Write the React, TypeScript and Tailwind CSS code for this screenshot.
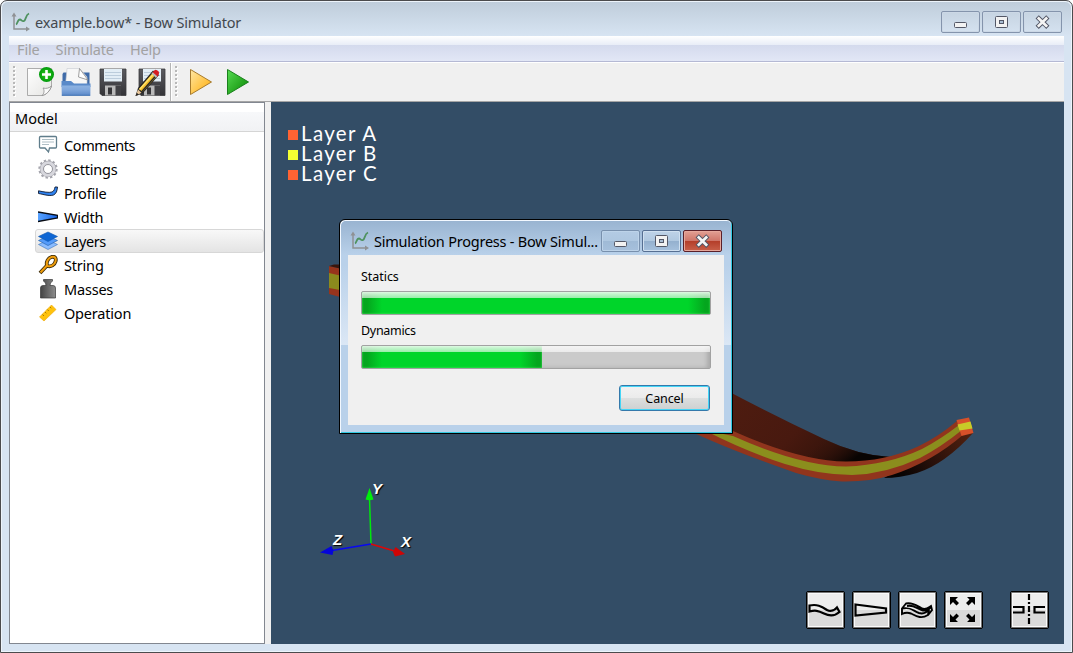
import React from "react";

const UI = "[font-family:'Noto_Sans','Open_Sans',sans-serif]";

function ChartIcon() {
  return (
    <svg width="20" height="20" viewBox="0 0 20 20" fill="none">
      <path d="M3 3V17H16" stroke="#8f9194" strokeWidth="1.500" />
      <path d="M3 0.500L0.500 4.500H5.500ZM19 17L15 14.500V19.500Z" fill="#8f9194" />
      <path d="M5 12.500C6.500 12 6.500 7.500 9 7.500C10.500 7.500 11 10 13 9C15 8 14.500 3 18 1.500" stroke="#4f9260" strokeWidth="1.800" />
    </svg>
  );
}

function MinGlyph() {
  return (
    <svg width="15" height="15" viewBox="0 0 15 15">
      <rect x="1.500" y="7.500" width="12" height="5" rx="1" fill="#f2f2f2" stroke="#535766" />
    </svg>
  );
}

function MaxGlyph() {
  return (
    <svg width="15" height="15" viewBox="0 0 15 15">
      <rect x="1.500" y="1.500" width="12" height="11" rx="1" fill="#f2f2f2" stroke="#535766" />
      <rect x="5.500" y="5.500" width="4" height="3" fill="#a9bdd3" stroke="#535766" />
    </svg>
  );
}

function CloseGlyph() {
  return (
    <svg width="15" height="15" viewBox="0 0 15 15">
      <path d="M3.800 3.500L11.200 10.700M11.200 3.500L3.800 10.700" stroke="#535766" strokeWidth="4.600" strokeLinecap="square" />
      <path d="M3.800 3.500L11.200 10.700M11.200 3.500L3.800 10.700" stroke="#f5f5f5" strokeWidth="2.700" strokeLinecap="square" />
    </svg>
  );
}

function Handle() {
  return (
    <svg width="4" height="32" viewBox="0 0 4 32">
      {[0, 4, 8, 12, 16, 20, 24, 28].map((y) => (
        <g key={y}>
          <rect x="1" y={y + 1} width="2" height="2" fill="#fff" />
          <rect x="0" y={y} width="2" height="2" fill="#b8b8b8" />
        </g>
      ))}
    </svg>
  );
}

function NewIcon() {
  return (
    <svg width="30" height="32" viewBox="0 0 30 32">
      <defs>
        <linearGradient id="paper" x1="0" y1="0" x2="1" y2="1">
          <stop offset="0" stopColor="#fff" />
          <stop offset="1" stopColor="#e4e4e2" />
        </linearGradient>
        <radialGradient id="plus" cx="0.5" cy="0.5" r="0.5">
          <stop offset="0" stopColor="#32cc20" />
          <stop offset="1" stopColor="#009a0b" />
        </radialGradient>
      </defs>
      <path d="M1.500 2.500H25.500V20C24 25 20 29 16 29.500H1.500Z" fill="url(#paper)" stroke="#999" strokeWidth="0.800" />
      <path d="M16 29.500C18.500 27.500 18.500 24 17 22C20 23 23.500 22 25.500 20C24 25 20 29 16 29.500Z" fill="#fafafa" stroke="#8b8b8b" strokeWidth="0.800" />
      <circle cx="20.500" cy="8.500" r="7.500" fill="url(#plus)" />
      <path d="M20.500 4V13M16 8.500H25" stroke="#fff" strokeWidth="2.600" />
    </svg>
  );
}

function OpenIcon() {
  return (
    <svg width="30" height="32" viewBox="0 0 30 32">
      <defs>
        <linearGradient id="folder" x1="0" y1="0" x2="0" y2="1">
          <stop offset="0" stopColor="#8eb3e2" />
          <stop offset="0.400" stopColor="#82a9dd" />
          <stop offset="1" stopColor="#5a88c8" />
        </linearGradient>
      </defs>
      <path d="M1.500 20V8L2.500 6.500H28.500V20Z" fill="#3f6ba8" />
      <path d="M4.500 19L6 2.500H18.500L26 11V19Z" fill="#f7f7f7" stroke="#c6cad0" strokeWidth="0.600" />
      <path d="M18.500 2.500L17.500 11L27 14Z" fill="#fff" stroke="#888" strokeWidth="0.800" />
      <path d="M0.500 15H10L13 17.500H29.500V21H0.500Z" fill="#5a8ac9" />
      <path d="M0.500 19.500H29.500L29.300 29.500H0.800Z" fill="url(#folder)" />
      <path d="M0.800 29.300H29.200" stroke="#4475b5" />
    </svg>
  );
}

function SaveIcon({ pencil = false }: { pencil?: boolean }) {
  return (
    <svg width="32" height="32" viewBox="0 0 32 32">
      <defs>
        <linearGradient id="disk" x1="0" y1="0" x2="0" y2="1">
          <stop offset="0" stopColor="#5b5b60" />
          <stop offset="1" stopColor="#333337" />
        </linearGradient>
      </defs>
      <path d="M4 3H30V29.500H6L4 27.500Z" fill="url(#disk)" stroke="#3b3b3e" strokeWidth="0.800" />
      <rect x="8" y="3" width="18" height="12.500" fill="#e3eef6" />
      <path d="M9 6.500H25M9 9.500H25M9 12.500H25" stroke="#bccddc" />
      <path d="M9 19.500H25V29.500H9Z" fill="#b9b9b9" />
      <rect x="19.500" y="19.500" width="5.500" height="10" fill="#414145" />
      <rect x="12" y="21.500" width="4" height="7" fill="#353538" />
      {pencil && (
        <g>
          <path d="M0.500 30L3 22L18 4.500L24 9L8 27Z" fill="#252525" />
          <path d="M4 23L18 6.500L22.200 9.800L7.500 26Z" fill="#f5bd27" />
          <path d="M4.500 23.500L19 7.500" stroke="#ffe36c" strokeWidth="1.500" />
          <path d="M6.500 26L21.500 9" stroke="#282828" strokeWidth="1.500" />
          <path d="M17.500 6.500L19.500 4.200Q21 3 23.500 5.300Q25 7.500 23.300 9.300L22 11Z" fill="#d61b22" />
          <path d="M16.500 7.800L17.700 6.300L22.300 10.300L21 11.800Z" fill="#bbb" />
          <path d="M0.500 30L3 23.500L6.500 26.800Z" fill="#e8c69a" />
          <path d="M0.500 30L1.700 26.700L4 28.800Z" fill="#222" />
        </g>
      )}
    </svg>
  );
}

function PlayIcon({ green = false }: { green?: boolean }) {
  return (
    <svg width="24" height="28" viewBox="0 0 24 28">
      <defs>
        <linearGradient id="gold" x1="0" y1="0" x2="1" y2="1">
          <stop offset="0" stopColor="#ffe7a4" />
          <stop offset="1" stopColor="#ffac05" />
        </linearGradient>
        <linearGradient id="green" x1="0" y1="0" x2="1" y2="1">
          <stop offset="0" stopColor="#56dc52" />
          <stop offset="1" stopColor="#078500" />
        </linearGradient>
      </defs>
      {green ? (
        <path d="M1.500 1.500L22.500 14L1.500 26.500Z" fill="url(#green)" stroke="#1a801c" />
      ) : (
        <path d="M1.500 1.500L22.500 14L1.500 26.500Z" fill="url(#gold)" stroke="#a77b2d" />
      )}
    </svg>
  );
}

const treeIcons: Record<string, React.ReactNode> = {
  Comments: (
    <>
      <path d="M1.500 2.500Q1.500 1.500 2.500 1.500H17.500Q18.500 1.500 18.500 2.500V12Q18.500 13 17.500 13H11.500L10.500 17L7 13H2.500Q1.500 13 1.500 12Z" fill="#fff" stroke="#607d8b" strokeWidth="1.300" />
      <path d="M4 4.500H16M4 7H16M4 9.500H11" stroke="#afbec5" />
    </>
  ),
  Settings: (
    <>
      <circle cx="10" cy="10" r="8.600" fill="none" stroke="#a5a5ad" strokeWidth="2.200" strokeDasharray="2.400 2.103" />
      <circle cx="10" cy="10" r="6" fill="none" stroke="#9b9ba2" strokeWidth="4.500" />
      <circle cx="10" cy="10" r="6.200" fill="none" stroke="#d7d7dd" strokeWidth="3.200" />
      <circle cx="10" cy="10" r="4.500" fill="#fff" stroke="#96969e" />
    </>
  ),
  Profile: (
    <path d="M0.500 7.800C5 8.800 11 10 14 9C16.500 8 16.500 5.500 17 4H19.500C19 8 18.500 10.500 15.500 12C11 13.500 5 11.200 0.500 10.500Z" fill="#2f82ef" stroke="#101b31" strokeWidth="0.900" />
  ),
  Width: (
    <>
      <defs>
        <linearGradient id="limb" x1="0" y1="0" x2="1" y2="0">
          <stop offset="0" stopColor="#5aa4ff" />
          <stop offset="1" stopColor="#1462e8" />
        </linearGradient>
      </defs>
      <path d="M0 5L20 8.300V11L0 14.500Z" fill="url(#limb)" />
      <path d="M0 5L19.500 8.300V11L0 14.500" fill="none" stroke="#0a0d14" strokeWidth="1.300" />
    </>
  ),
  Layers: (
    <>
      <path d="M0.500 13.500L10 9L19.500 13.500L10 18.500Z" fill="#8bbcff" stroke="#3d73b8" strokeWidth="0.600" />
      <path d="M0.500 9.500L10 5L19.500 9.500L10 14.500Z" fill="#549bfa" stroke="#1e5ca8" strokeWidth="0.600" />
      <path d="M0.500 5.500L10 1L19.500 5.500L10 10.500Z" fill="#0e66d4" stroke="#1057ad" strokeWidth="0.600" />
    </>
  ),
  String: (
    <>
      <path d="M2 18L9 10.500C8 7 10 3 13.500 2C17 1 18.500 3.500 17.500 6.500C16.500 10 13 12 9.500 11" fill="none" stroke="#3b2a08" strokeWidth="3.800" />
      <path d="M2.500 17.500L9 10.500C8 7 10 3 13.500 2C17 1 18.500 3.500 17.500 6.500C16.500 10 13 12 9.500 11" fill="none" stroke="#ef9d0c" strokeWidth="2.100" />
    </>
  ),
  Masses: (
    <>
      <defs>
        <linearGradient id="mass" x1="0" y1="0" x2="1" y2="0">
          <stop offset="0" stopColor="#444" />
          <stop offset="1" stopColor="#8d8d8d" />
        </linearGradient>
      </defs>
      <path d="M2.500 19V9Q2.500 6.500 5 6.500H8L7.500 4L5.500 2V0.500H14.500V2L12.500 4L12 6.500H15Q17.500 6.500 17.500 9V19Z" fill="url(#mass)" stroke="#383838" strokeWidth="0.700" />
    </>
  ),
  Operation: (
    <>
      <path d="M1.500 14L13.500 2L18 6.500L6 18Z" fill="#ffc20d" stroke="#eda500" strokeWidth="0.600" />
      <path d="M4.500 11.500L6 13M7 9L8.300 10.300M9.300 6.500L10.800 8M12 4L13.200 5.200" stroke="#9c7300" strokeWidth="0.900" />
    </>
  ),
};

function TreeRow({ name }: { name: string }) {
  const on = name === "Layers";
  return (
    <div className={`ml-[25px] flex h-6 items-center rounded-[3px] border pl-0.5 ${on ? "border-[#d7d7d7] bg-linear-to-b from-[#f8f8f8] to-[#e4e4e4]" : "border-transparent"}`}>
      <svg width="20" height="20" viewBox="0 0 20 20" className="mr-1.5 shrink-0">
        {treeIcons[name]}
      </svg>
      <span className={`text-[14.5px] leading-6 whitespace-nowrap ${name === "Comments" || name === "Layers" ? "tracking-[-0.4px]" : "tracking-[-0.2px]"}`}>{name}</span>
    </div>
  );
}

function Scene() {
  return (
    <svg className="absolute inset-0" width="793" height="542" viewBox="271 102 793 542">
      <defs>
        <linearGradient id="back" x1="730" y1="400" x2="800" y2="470" gradientUnits="userSpaceOnUse">
          <stop offset="0" stopColor="#4e1c10" />
          <stop offset="0.700" stopColor="#48190f" />
          <stop offset="1" stopColor="#3a150c" />
        </linearGradient>
        <linearGradient id="under" x1="970" y1="435" x2="905" y2="478" gradientUnits="userSpaceOnUse">
          <stop offset="0" stopColor="#50200f" />
          <stop offset="0.600" stopColor="#28100a" />
          <stop offset="1" stopColor="#080403" />
        </linearGradient>
        <linearGradient id="tail" x1="825" y1="440" x2="845" y2="466" gradientUnits="userSpaceOnUse">
          <stop offset="0" stopColor="#30120a" stopOpacity="0" />
          <stop offset="1" stopColor="#080403" />
        </linearGradient>
      </defs>
      <path d="M329 266L340 268.500V297L329 294Z" fill="#97341c" />
      <path d="M329 266L334 264.500H340V268.500Z" fill="#3a150c" />
      <path d="M329 273L340 275.500V290L329 288Z" fill="#8b8a1d" />
      <path d="M720 387Q775 416 824 439Q857 455 890 457L870 470L830 467L720 435Z" fill="url(#back)" />
      <path d="M790 427L824 439Q857 455 890 457L860 468L800 460Z" fill="url(#tail)" />
      <path d="M973 433Q945 464 917 473Q900 478 884 478L905 465L958 430Z" fill="url(#under)" />
      <path d="M690 427L733 431Q800 461 846 461.500Q885 461.500 918 446.500Q938 437 957 421L964 434Q932 462 892 475Q870 482 842 481.500Q820 480 796 473Q730 450 692 432Z" fill="#91351d" />
      <path d="M704 430L733 436Q800 466 846 466.500Q888 465 922 449Q941 439 959 425L962 430Q941 447 920 458Q886 474 852 475Q820 475 785 464Q745 451 706 431Z" fill="#8b8e1d" />
      <path d="M956.500 420L969 417.500L973.500 433L961.500 436Z" fill="#d65029" />
      <path d="M957.500 424.500L970.500 421.500L972.500 428.500L959.500 430.500Z" fill="#c8cb28" />

      <path d="M371 544L369.500 498" stroke="#00e80c" strokeWidth="1.500" />
      <path d="M369.500 488L365.500 499.500Q369.500 501 373.500 499.500Z" fill="#00ee0c" />
      <path d="M371 544L332 550.500" stroke="#0909f1" strokeWidth="1.500" />
      <path d="M320 552.500L331.500 546L333.500 550.500L332.500 555Z" fill="#0505da" />
      <path d="M371 544L396 551.500" stroke="#dd0707" strokeWidth="1.500" />
      <path d="M405 554L395.500 547L393 552L395 556.500Z" fill="#cf0505" />
    </svg>
  );
}

function AxisLabel({ t, place }: { t: string; place: string }) {
  return (
    <span className={`absolute [font-family:'Liberation_Sans',sans-serif] text-[15px] leading-4 font-bold text-white italic [text-shadow:1px_1px_1px_#000] ${place}`}>{t}</span>
  );
}

function LegendRow({ name, yellow = false }: { name: string; yellow?: boolean }) {
  return (
    <div className="flex h-5 items-center">
      <span className={`mt-0.5 mr-[3px] size-2.5 ${yellow ? "bg-[#f4ff32]" : "bg-[#ff6333]"}`} />
      <span className="-mt-[3px] [font-family:Lato,sans-serif] text-[20.5px] leading-5 tracking-[1.35px] whitespace-nowrap text-white">{name}</span>
    </div>
  );
}

function ViewButton({ children }: { children: React.ReactNode }) {
  return (
    <button className="flex h-[38px] w-[39px] items-center justify-center rounded-[2px] border border-black bg-linear-to-b from-[#ededed] from-50% to-[#dadada] to-50% shadow-[inset_0_0_0_1px_#777,inset_0_0_0_2px_#fafafa]">
      <svg width="37" height="36" viewBox="0 0 37 36" fill="none" stroke="#000" strokeWidth="2.200">
        {children}
      </svg>
    </button>
  );
}

function Progress({ full = false }: { full?: boolean }) {
  return (
    <div className="relative h-6 w-[350px] overflow-hidden rounded-[2px] border border-[#a2a2a2] bg-[#cacaca] shadow-[inset_-3px_0_4px_#aaa]">
      <div className={`h-full ${full ? "w-full" : "w-[180px]"} bg-linear-to-r from-[#04a61e] from-[5px] to-[#00d52a] to-[20px]`}>
        <div className="h-full bg-linear-to-l from-[#04a61e] from-[5px] to-transparent to-[22px] shadow-[inset_0_0_2px_#62ed72]" />
      </div>
      <div className="absolute inset-x-0 top-0 h-1.5 bg-linear-to-b from-white/85 to-white/60" />
    </div>
  );
}

function DialogButton({ kind }: { kind: "min" | "max" | "close" }) {
  const tone =
    kind === "close"
      ? "border-[#5a2029] bg-[linear-gradient(#e2a094,#ce7467_50%,#b43d29_50%,#c8604a)] shadow-[inset_0_0_0_1px_#e6a79b]"
      : kind === "min"
        ? "border-[#7890ad] bg-[linear-gradient(#b3cbe4,#aec7e0_50%,#9fbad6_50%,#a6c0dc)] shadow-[inset_0_0_0_1px_#bdd3e9]"
        : "border-[#566f92] bg-[linear-gradient(#bfd3e8,#b0c8e0_50%,#94b0ce_50%,#a6c1dd)] shadow-[inset_0_0_0_1px_#d0e0f0]";
  return (
    <button className={`flex h-[22px] w-[39px] items-center justify-center rounded-[2px] border ${tone}`}>
      {kind === "min" ? <MinGlyph /> : kind === "max" ? <MaxGlyph /> : <CloseGlyph />}
    </button>
  );
}

function ProgressDialog() {
  return (
    <div className="absolute top-[117px] left-[68px] flex h-[215px] w-[394px] flex-col rounded-t-[6px] border border-black bg-[linear-gradient(#b9d1ea_45px,#dbe7f5_125px,#b9d1ea_125px)] px-2 pb-2 shadow-[inset_1px_1px_0_#f2f8ff,inset_-1px_-1px_0_#31c9e2] text-black">
      <div className="-mx-[7px] mt-px flex h-[34px] shrink-0 items-start rounded-t-[5px] bg-linear-to-b from-[#99b4d1] to-[#b9d1ea] pl-[9px]">
        <div className="mt-[10px] mr-1">
          <ChartIcon />
        </div>
        <span className="mt-[9px] w-[227px] text-[14.5px] leading-[22px] tracking-[-0.22px] whitespace-nowrap">Simulation Progress - Bow Simul...</span>
        <div className="mt-[9px] flex gap-0.5">
          <DialogButton kind="min" />
          <DialogButton kind="max" />
          <DialogButton kind="close" />
        </div>
      </div>
      <div className="flex min-h-0 grow flex-col bg-[#f0f0f0] pl-[13px] text-[12.5px] tracking-[-0.3px]">
        <span className="mt-[13px] h-[18px] leading-[18px] tracking-[-0.05px]">Statics</span>
        <div className="mt-[5px]">
          <Progress full />
        </div>
        <span className="mt-[7px] h-[18px] leading-[18px]">Dynamics</span>
        <div className="mt-[5px]">
          <Progress />
        </div>
        <button className="mt-4 ml-[258px] h-[26px] w-[91px] shrink-0 rounded-[3px] border border-[#3479ab] bg-[linear-gradient(#f2f2f2,#ebebeb_50%,#dddfdf_50%,#cdd0d0)] pt-px leading-[22px] tracking-[-0.1px] shadow-[inset_0_0_0_1px_#44d5f6]">
          Cancel
        </button>
      </div>
    </div>
  );
}

export default function App() {
  return (
    <div className={`flex h-[653px] w-[1073px] flex-col overflow-hidden rounded-t-[7px] border border-[#4b4b4d] bg-[#d7e4f2] px-2 pb-2 text-black shadow-[inset_0_0_0_1px_#edf4fb] ${UI}`}>
      <header className="-mx-[7px] mt-px flex h-[34px] shrink-0 items-start rounded-t-[6px] bg-linear-to-b from-[#bfcddb] to-[#d7e4f2] pr-[9px] pl-[9px]">
        <div className="mt-[10px] mr-1">
          <ChartIcon />
        </div>
        <span className="mt-[9px] text-[14.5px] leading-[22px] tracking-[-0.14px] text-[#43484e]">example.bow* - Bow Simulator</span>
        <div className="mt-[9px] ml-auto flex gap-0.5">
          {[<MinGlyph key="a" />, <MaxGlyph key="b" />, <CloseGlyph key="c" />].map((g, i) => (
            <button key={i} className="flex h-[22px] w-[39px] items-center justify-center rounded-[2px] border border-[#8494ac] shadow-[inset_0_0_0_1px_#ccd8e6]">
              {g}
            </button>
          ))}
        </div>
      </header>
      <nav className="flex h-[26px] shrink-0 items-center gap-4 border-b border-[#b5b9d4] bg-[linear-gradient(#fff_0,#e8edf7_9px,#d4daed_9px,#e2e7f6_100%)] pt-0.5 pl-2 text-[14.5px] tracking-[-0.15px] text-[#a2a2a2]">
        <span>File</span>
        <span>Simulate</span>
        <span>Help</span>
      </nav>
      <div className="flex h-10 shrink-0 items-center border-t border-b border-t-white border-b-[#a5a5a5] bg-[#f0f0f0]">
        <div className="flex h-full w-[162px] items-center border-r border-[#b5b5b5] pl-1">
          <Handle />
          <div className="ml-[9px] flex items-center">
            <NewIcon />
            <div className="ml-[5px]"><OpenIcon /></div>
            <div className="ml-[5px]"><SaveIcon /></div>
            <div className="ml-[7px]"><SaveIcon pencil /></div>
          </div>
        </div>
        <div className="flex h-full grow items-center border-l border-white pl-[3px]">
          <Handle />
          <div className="ml-[9.5px] flex items-center gap-[13px]">
            <PlayIcon />
            <PlayIcon green />
          </div>
        </div>
      </div>
      <main className="flex min-h-0 grow bg-[#f0f0f0]">
        <aside className="mr-1.5 w-[256px] shrink-0 border border-[#828790] bg-white">
          <div className="mb-px h-[29px] border-b border-[#d5d5d5] bg-[linear-gradient(#fff_9px,#f7f8fa_9px,#f1f2f4)] pl-[5px] text-[14.5px] leading-[30px]">Model</div>
          {Object.keys(treeIcons).map((n) => (
            <TreeRow key={n} name={n} />
          ))}
        </aside>
        <section className="relative flex grow flex-col justify-between bg-[#334d66]">
          <Scene />
          <div className="relative mt-[22px] ml-[17px]">
            <LegendRow name="Layer A" />
            <LegendRow name="Layer B" yellow />
            <LegendRow name="Layer C" />
          </div>
          <AxisLabel t="Y" place="left-[101px] top-[379px]" />
          <AxisLabel t="Z" place="left-[62px] top-[430px]" />
          <AxisLabel t="X" place="left-[130px] top-[432px]" />
          <div className="relative mb-[15px] flex justify-end gap-[7px] pr-[15px]">
            <ViewButton>
              <path d="M2.500 13.500C10 12 14 14 20 18C24 20 28 18 30 15.500L32.500 20C28 24 22 24 17 21.500C11 18.500 8 18 2.500 19.500Z" />
            </ViewButton>
            <ViewButton>
              <path d="M2.500 12.500L33 16.500V20.500L2.500 23.500Z" />
            </ViewButton>
            <ViewButton>
              <path strokeWidth="1.900" d="M3 16.500L7 11.500C14 10 18 14 23 16.500C27 18 29 16 32 14L33 18L29 23C22 27.500 17 24 12 21.500C8 20 5 21 3 22ZM3 16.500C12 14.500 14 19 20 21C25 22.500 28 20 30 17.500L29 23M8 14C15 12.500 18 17 24 18.500C28 19 30 17 32 15" />
            </ViewButton>
            <ViewButton>
              <g fill="#000" stroke="none">
                <path d="M5 5H13L10.500 7.500L14 11L11.500 13.500L8 10L5 13Z" />
                <path d="M30 5H22L24.500 7.500L21 11L23.500 13.500L27 10L30 13Z" />
                <path d="M5 30H13L10.500 27.500L14 24L11.500 21.500L8 25L5 22Z" />
                <path d="M30 30H22L24.500 27.500L21 24L23.500 21.500L27 25L30 22Z" />
              </g>
            </ViewButton>
            <div className="w-[13px]" />
            <ViewButton>
              <path d="M2 15H12.500V20.500H2M34 15H23.500V20.500H34" />
              <path d="M18 2V33" strokeDasharray="6 2 2 2" />
            </ViewButton>
          </div>
          <ProgressDialog />
        </section>
      </main>
    </div>
  );
}
